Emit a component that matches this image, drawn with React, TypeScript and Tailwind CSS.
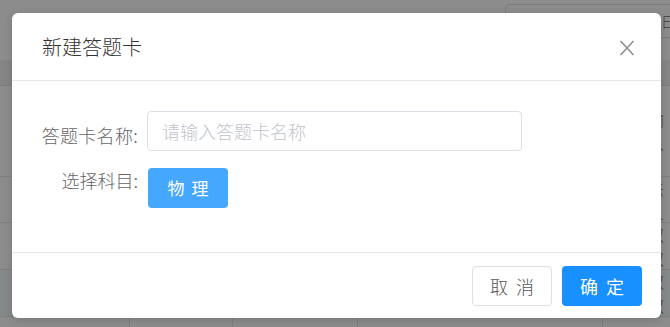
const cjk = "font-['Noto_Sans_CJK_SC','Noto_Sans',sans-serif]"

// dimmed page behind the dialog (only a strip of it shows)
function BackdropPage() {
  const rows = [
    { h: 'h-[91px]', text: '输入', bg: '' },
    { h: 'h-[46px]', text: '法人', bg: '' },
    { h: 'h-[47px]', text: '双双', bg: '' },
    { h: 'h-[47px]', text: '双双', bg: 'bg-[#868989]' },
  ]
  return (
    <div className="flex h-full flex-col">
      <div className="flex h-[60px] justify-end pt-[4px]">
        <div className="mr-[-30px] flex h-[34px] w-[195px] items-center justify-end rounded-[5px] border border-[#7b7b7b] pr-[24px] text-[14px] text-[#3d3d3d]">
          日
        </div>
      </div>
      <div className="h-[26px] border-b border-[#7e7e7e] bg-[#858585]" />
      {rows.map((r, i) => (
        <div key={i} className={`${r.h} ${r.bg} flex items-center justify-end border-b border-[#7e7e7e]`}>
          <span className="mr-[-8px] w-[30px] text-[16px] text-[#3a3a3a]">{r.text}</span>
        </div>
      ))}
      <div className="grid flex-1 grid-cols-[130px_103px_125px_245px_1fr]">
        <div className="border-r border-[#7e7e7e]" />
        <div className="border-r border-[#7e7e7e]" />
        <div className="border-r border-[#7e7e7e]" />
        <div className="border-r border-[#7e7e7e]" />
        <div />
      </div>
    </div>
  )
}

export default function App() {
  return (
    <div className={`relative h-[327px] w-[670px] overflow-hidden bg-[#8c8c8c] font-light ${cjk}`}>
      <BackdropPage />

      {/* 弹窗 */}
      <div className="absolute left-[12px] top-[13px] flex h-[305px] w-[649px] flex-col rounded-[6px] bg-white shadow-[0_2px_8px_rgba(0,0,0,0.15)]">
        <div className="flex h-[68px] shrink-0 items-center border-b border-[#e6e6e6] pl-[30px] pr-[26px]">
          <span className="text-[20px] leading-[28px] text-[#333]">新建答题卡</span>
          <button className="ml-auto mt-[2px] text-[#8c8c8c]" aria-label="关闭">
            <svg viewBox="0 0 16 16" className="h-[16px] w-[16px]" fill="none" stroke="currentColor" strokeWidth="1.5" aria-hidden="true">
              <path d="M1.5 1 14.5 15M14.5 1 1.5 15" />
            </svg>
          </button>
        </div>

        <div className="flex flex-1 flex-col gap-[17px] px-[26px] pt-[30px]">
          <div className="flex">
            <label className="w-[100px] shrink-0 whitespace-nowrap pt-[12px] text-right text-[18px] leading-[25px] tracking-[0.3px] text-[#666]">
              答题卡名称:
            </label>
            <input
              placeholder="请输入答题卡名称"
              className="ml-[9px] h-[40px] w-[375px] rounded-[4px] border border-[#dcdfe6] px-[14px] text-[18px] font-light text-[#606266] outline-none placeholder:text-[#c0c4cc]"
            />
          </div>
          <div className="flex">
            <label className="w-[100px] shrink-0 whitespace-nowrap pt-[0px] text-right text-[18px] leading-[25px] text-[#666]">
              选择科目:
            </label>
            <button className="ml-[10px] flex h-[40px] w-[80px] items-center justify-center gap-[7px] rounded-[4px] bg-[#46a7ff] text-[17px] font-normal text-white">
              <span>物</span>
              <span>理</span>
            </button>
          </div>
        </div>

        <div className="flex h-[66px] shrink-0 items-start justify-end gap-[10px] border-t border-[#e6e6e6] pr-[19px] pt-[13px]">
          <button className="flex h-[40px] w-[80px] items-center justify-center gap-[8px] rounded-[4px] border border-[#dcdfe6] bg-white text-[18px] text-[#555]">
            <span>取</span>
            <span>消</span>
          </button>
          <button className="flex h-[40px] w-[80px] items-center justify-center gap-[8px] rounded-[4px] bg-[#1890ff] text-[18px] font-normal text-white">
            <span>确</span>
            <span>定</span>
          </button>
        </div>
      </div>
    </div>
  )
}
